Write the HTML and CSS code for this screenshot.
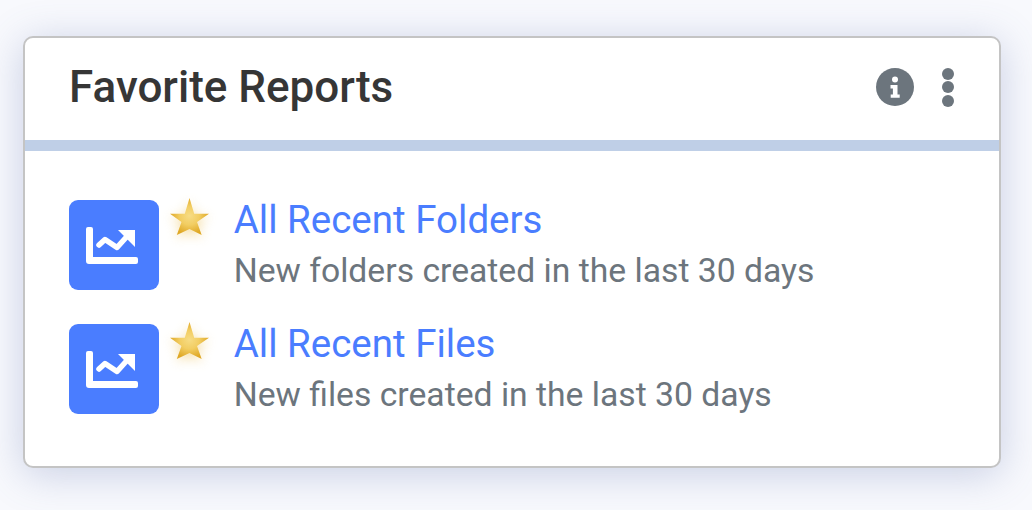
FILE: index.html
```html
<!DOCTYPE html>
<html lang="en">
<head>
    <meta charset="UTF-8">
    <title>Favorite Reports</title>
    <link rel="stylesheet" href="styles.css">
</head>
<body>
    <div class="card">
        <header class="card-header">
            <h1>Favorite Reports</h1>
            <div class="actions">
                <svg class="info" viewBox="0 0 38 38" width="38" height="38">
                    <circle cx="19" cy="19" r="19" fill="#6c757d"/>
                    <circle cx="19" cy="11.5" r="3" fill="#fff"/>
                    <path d="M14.500 17h7v9.500h2.200v3.300h-9v-3.300h2.200v-6h-2.400z" fill="#fff"/>
                </svg>
                <div class="dots"><span></span><span></span><span></span></div>
            </div>
        </header>
        <div class="card-body">
            <div class="report">
                <span class="report-icon">
                    <svg viewBox="0 0 52 37" width="52" height="37">
                        <path d="M0 2a2 2 0 0 1 2-2h3a2 2 0 0 1 2 2v28h43a2 2 0 0 1 2 2v3a2 2 0 0 1-2 2H3a3 3 0 0 1-3-3z" fill="#fff"/>
                        <path d="M13 18l6-5.500 12 8 9-10" fill="none" stroke="#fff" stroke-width="5.500" stroke-linecap="round" stroke-linejoin="round"/>
                        <path d="M32 3h17v17z" fill="#fff"/>
                    </svg>
                </span>
                <svg class="star" viewBox="0 0 40 40" width="40" height="40">
                    <defs>
                        <radialGradient id="gold1" cx="50%" cy="48%" r="50%">
                            <stop offset="0" stop-color="#f7dc84"/>
                            <stop offset="0.5" stop-color="#f2cd62"/>
                            <stop offset="1" stop-color="#dfa826"/>
                        </radialGradient>
                    </defs>
                    <path d="M20.500 0l4.700 15.700H40l-12 8.300 4.700 13-12.200-6-12.700 6 4.700-13L1 15.700h14.800z" fill="url(#gold1)"/>
                </svg>
                <div class="report-text">
                    <a class="report-title">All Recent Folders</a>
                    <p>New folders created in the last 30 days</p>
                </div>
            </div>
            <div class="report">
                <span class="report-icon">
                    <svg viewBox="0 0 52 37" width="52" height="37">
                        <path d="M0 2a2 2 0 0 1 2-2h3a2 2 0 0 1 2 2v28h43a2 2 0 0 1 2 2v3a2 2 0 0 1-2 2H3a3 3 0 0 1-3-3z" fill="#fff"/>
                        <path d="M13 18l6-5.500 12 8 9-10" fill="none" stroke="#fff" stroke-width="5.500" stroke-linecap="round" stroke-linejoin="round"/>
                        <path d="M32 3h17v17z" fill="#fff"/>
                    </svg>
                </span>
                <svg class="star" viewBox="0 0 40 40" width="40" height="40">
                    <path d="M20.500 0l4.700 15.700H40l-12 8.300 4.700 13-12.200-6-12.700 6 4.700-13L1 15.700h14.800z" fill="url(#gold1)"/>
                </svg>
                <div class="report-text">
                    <a class="report-title">All Recent Files</a>
                    <p>New files created in the last 30 days</p>
                </div>
            </div>
        </div>
    </div>
</body>
</html>
```

FILE: styles.css
```css
html, body {
    height: 100%;
}
body {
    margin: 0;
    padding: 36px 31px 0 23px;
    box-sizing: border-box;
    overflow: hidden;
    background: #f8f9fd;
    font-family: Roboto, sans-serif;
}
.card {
    height: 432px;
    box-sizing: border-box;
    background: #fff;
    border: 2px solid #c4c4c4;
    border-radius: 10px;
    box-shadow: 0 6px 40px rgba(90, 110, 170, 0.3);
}
.card-header {
    display: flex;
    justify-content: space-between;
    align-items: center;
    height: 102px;
    padding: 0 45px 0 44px;
    border-bottom: 11px solid #bfcfe7;
}
.card-header h1 {
    margin: 0 0 4px;
    font-size: 44px;
    font-weight: 500;
    color: #363636;
}
.actions {
    display: flex;
    align-items: center;
    gap: 28px;
    margin-bottom: 4px;
}
.info {
    display: block;
}
.dots {
    display: flex;
    flex-direction: column;
    gap: 1.5px;
}
.dots span {
    width: 12px;
    height: 12px;
    border-radius: 50%;
    background: #6c757d;
}
.card-body {
    display: flex;
    flex-direction: column;
    gap: 34px;
    padding: 49px 44px 0;
}
.report {
    display: flex;
    align-items: flex-start;
}
.report-icon {
    display: flex;
    align-items: center;
    justify-content: center;
    width: 90px;
    height: 90px;
    padding-right: 4px;
    box-sizing: border-box;
    border-radius: 9px;
    background: #4a7dff;
}
.star {
    width: 40px;
    height: 40px;
    margin: -2px 24.700px 0 10px;
    filter: drop-shadow(0 3px 6px rgba(234, 185, 60, 0.45));
}
.report-text {
    margin-top: -3px;
}
.report-title {
    display: block;
    font-size: 38.5px;
    line-height: 46px;
    color: #4a7dff;
}
.report-text p {
    margin: 9px 0 0;
    font-size: 33.7px;
    line-height: 38px;
    color: #6c757d;
}
```
